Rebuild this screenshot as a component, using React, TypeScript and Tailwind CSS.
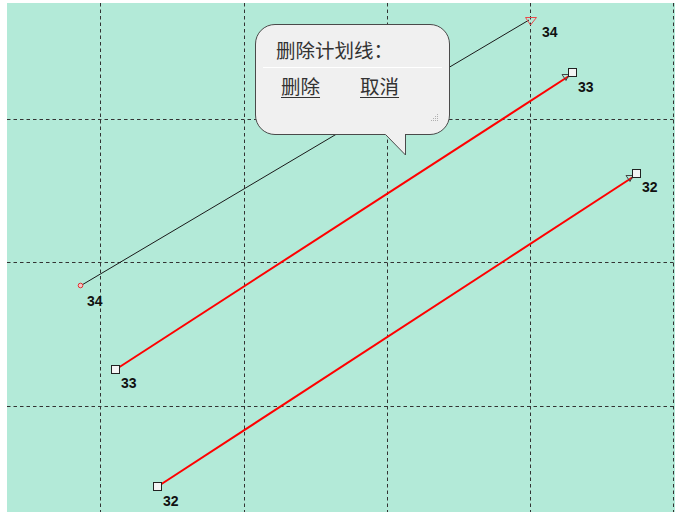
import React from "react";

const vx = [100.5, 244.5, 387.5, 530.5, 673.5];
const hy = [119.5, 262.5, 406.5];

function Square({ x, y }: { x: number; y: number }) {
  return <rect x={x + 0.5} y={y + 0.5} width={8} height={8} fill="#f4f4f4" stroke="#222" strokeWidth={1} />;
}

function Label({ x, y, t }: { x: number; y: number; t: string }) {
  return (
    <text x={x} y={y} fontFamily="'Liberation Sans', Arial, sans-serif" fontWeight={700} fontSize={14} fill="#111">
      {t}
    </text>
  );
}

export default function App() {
  return (
    <div className="w-[675px] h-[512px] bg-white overflow-hidden pl-[7px] pt-[3px]">
      <div className="relative w-[668px] h-[509px] bg-[#b3ead8]">
        <svg className="block" width={668} height={509} viewBox="7 3 668 509">
          {vx.map((x) => (
            <line key={x} x1={x} y1={3} x2={x} y2={512} stroke="#333" strokeWidth={1} strokeDasharray="3.5 3" />
          ))}
          {hy.map((y) => (
            <line key={y} x1={7} y1={y} x2={675} y2={y} stroke="#333" strokeWidth={1} strokeDasharray="3.5 3" />
          ))}
          {/* black plan line 34 */}
          <line x1={81} y1={285.5} x2={529} y2={20} stroke="#1a1a1a" strokeWidth={1} />
          <circle cx={80.5} cy={285.5} r={2.3} fill="#f3c9c9" stroke="#e03030" strokeWidth={1} />
          <polygon points="525.5,17.5 536.5,17.5 530.5,25" fill="none" stroke="#e84a4a" strokeWidth={1} />
          {/* red line 33 */}
          <line x1={119.5} y1={367} x2={569} y2={76} stroke="#ff0000" strokeWidth={2} />
          <polygon points="562,74.5 569,74.5 566,80.5" fill="none" stroke="#444" strokeWidth={1} />
          <Square x={568} y={68} />
          <Square x={111} y={365} />
          {/* red line 32 */}
          <line x1={161.5} y1={484} x2={633} y2={177} stroke="#ff0000" strokeWidth={2} />
          <polygon points="626,175.5 633,175.5 630,181.5" fill="none" stroke="#444" strokeWidth={1} />
          <Square x={632} y={169} />
          <Square x={153} y={482} />
          <Label x={542} y={37} t="34" />
          <Label x={578} y={92} t="33" />
          <Label x={87} y={306} t="34" />
          <Label x={121} y={388} t="33" />
          <Label x={163} y={506} t="32" />
          <Label x={642} y={192} t="32" />
        </svg>

        <div
          className="absolute left-[248px] top-[21px] w-[195px] h-[111px] rounded-[20px] border border-[#4a4a4a] bg-[#f0f0f0] pt-[16px] text-[#333]"
          style={{ fontFamily: "'Noto Sans CJK SC', 'Noto Sans', sans-serif" }}
        >
          <div className="pl-[20px] text-[19.5px] leading-[18px]">删除计划线：</div>
          <div className="mx-[7px] mt-[8px] h-px bg-white" />
          <div className="flex gap-[40px] pl-[25px] mt-[9px] text-[19.5px] leading-[18px]">
            <span className="underline underline-offset-[3px]">删除</span>
            <span className="underline underline-offset-[3px]">取消</span>
          </div>
          <svg className="absolute right-[10px] bottom-[12px]" width={8} height={8} viewBox="0 0 8 8">
            <rect x={6} y={0} width={1} height={1} fill="#b0b0b0" />
            <rect x={4} y={2} width={1} height={1} fill="#b0b0b0" />
            <rect x={6} y={2} width={1} height={1} fill="#b0b0b0" />
            <rect x={2} y={4} width={1} height={1} fill="#b0b0b0" />
            <rect x={4} y={4} width={1} height={1} fill="#b0b0b0" />
            <rect x={6} y={4} width={1} height={1} fill="#b0b0b0" />
            <rect x={0} y={6} width={1} height={1} fill="#b0b0b0" />
            <rect x={2} y={6} width={1} height={1} fill="#b0b0b0" />
            <rect x={4} y={6} width={1} height={1} fill="#b0b0b0" />
            <rect x={6} y={6} width={1} height={1} fill="#b0b0b0" />
          </svg>
          <svg className="absolute left-[129px] top-[109px]" width={22} height={22} viewBox="0 0 22 22">
            <polygon points="0,0 20.5,21 20.5,0" fill="#f0f0f0" />
            <line x1={0.5} y1={0.5} x2={20.5} y2={21} stroke="#4a4a4a" strokeWidth={1} />
            <line x1={20.5} y1={0} x2={20.5} y2={21} stroke="#4a4a4a" strokeWidth={1} />
          </svg>
        </div>
      </div>
    </div>
  );
}
